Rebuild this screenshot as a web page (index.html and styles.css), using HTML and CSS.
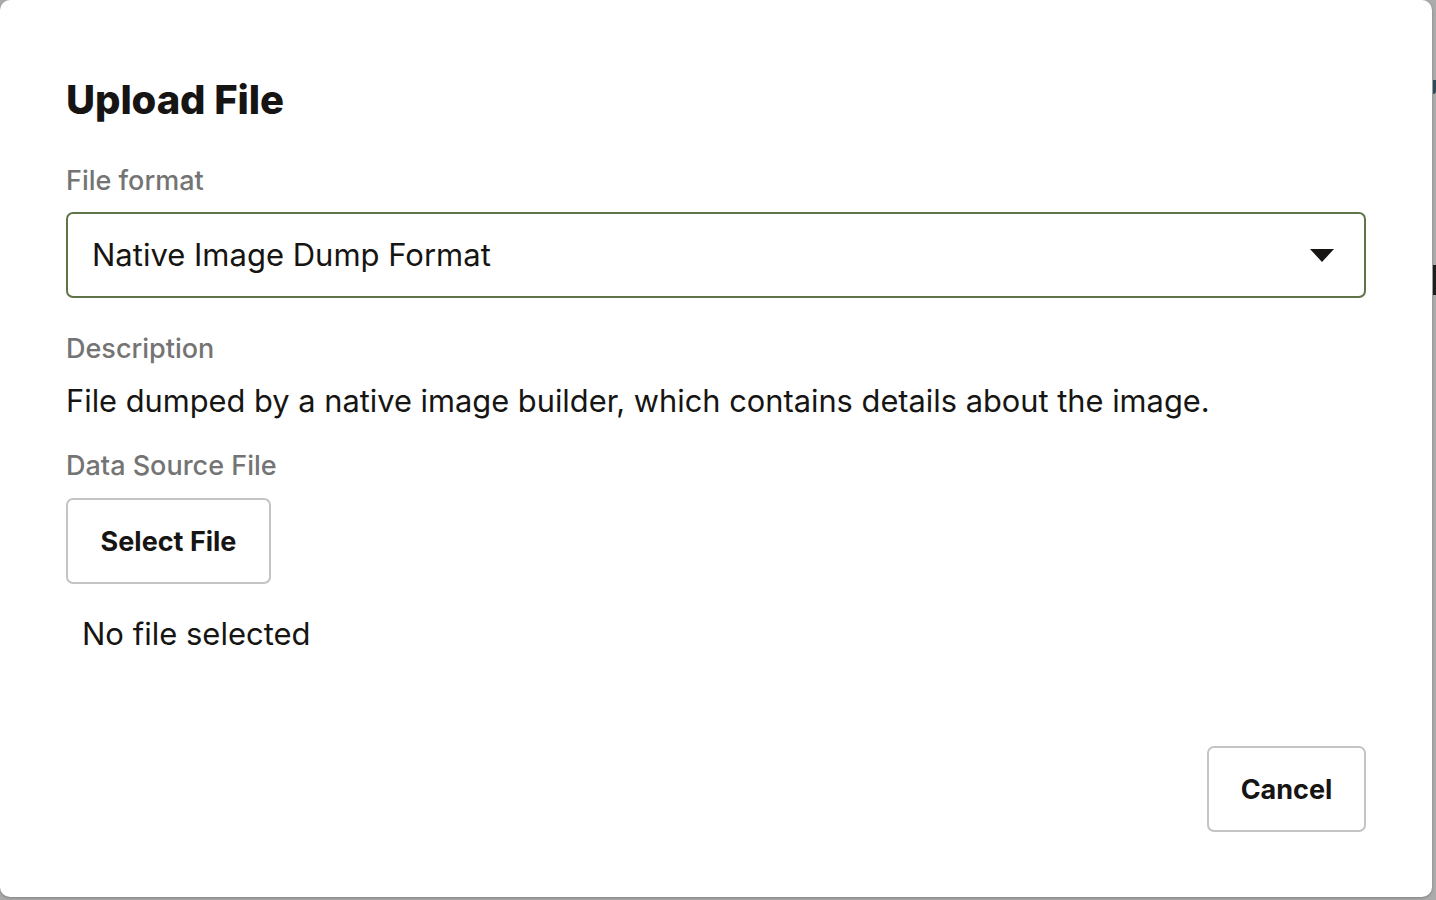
FILE: index.html
```html
<!DOCTYPE html>
<html>
<head>
<meta charset="utf-8">
<link rel="stylesheet" href="styles.css">
</head>
<body>
<div class="backdrop">
  <div class="dialog">
    <h1 class="title">Upload File</h1>
    <div class="field">
      <div class="label label-format">File format</div>
      <div class="select">
        <span class="select-text">Native Image Dump Format</span>
        <svg class="caret" width="24" height="13" viewBox="0 0 24 13"><path d="M0 0 H24 L12 13 Z" fill="#161513"/></svg>
      </div>
    </div>
    <div class="field">
      <div class="label label-desc">Description</div>
      <div class="desc">File dumped by a native image builder, which contains details about the image.</div>
    </div>
    <div class="field">
      <div class="label label-src">Data Source File</div>
      <button class="btn btn-select">Select File</button>
      <div class="nofile">No file selected</div>
    </div>
    <div class="footer">
      <button class="btn btn-cancel">Cancel</button>
    </div>
  </div>
  <div class="side">
    <div class="side-mark side-mark-a"></div>
    <div class="side-mark side-mark-b"></div>
  </div>
</div>
</body>
</html>
```
FILE: styles.css
```css
html, body {
  margin: 0;
  padding: 0;
  height: 100%;
}
body {
  background: #ababab;
  font-family: Inter, "Noto Sans", sans-serif;
  color: #161513;
  overflow: hidden;
}
.backdrop {
  display: flex;
  height: 900px;
}
.dialog {
  width: 1432px;
  height: 897px;
  flex: none;
  background: #ffffff;
  border-radius: 10px;
  box-shadow: 0 1px 3px rgba(0,0,0,0.25);
  box-sizing: border-box;
  padding: 76px 66px 0 66px;
  display: flex;
  flex-direction: column;
}
.title {
  margin: 0;
  font-size: 40px;
  font-weight: 800;
  line-height: 48px;
  letter-spacing: -0.1px;
}
.label {
  font-size: 27px;
  font-weight: 500;
  color: #747474;
  line-height: 32px;
}
.label-format {
  margin-top: 41px;
}
.select {
  margin-top: 15px;
  height: 86px;
  box-sizing: border-box;
  border: 2px solid #5f7449;
  border-radius: 7px;
  display: flex;
  align-items: center;
  padding: 0 30px 0 24px;
}
.select-text {
  flex: 1;
  font-size: 31px;
  line-height: 38px;
}
.caret {
  display: block;
}
.label-desc {
  margin-top: 35px;
}
.desc {
  margin-top: 17px;
  font-size: 30.8px;
  line-height: 38px;
}
.label-src {
  margin-top: 30px;
}
.btn {
  font-family: inherit;
  background: #ffffff;
  border: 2px solid #c4c4c4;
  border-radius: 7px;
  font-size: 27px;
  font-weight: 700;
  color: #161513;
  height: 86px;
  box-sizing: border-box;
  padding: 0;
  cursor: pointer;
}
.btn-select {
  margin-top: 16px;
  width: 205px;
}
.nofile {
  margin-top: 31px;
  padding-left: 16px;
  font-size: 31px;
  line-height: 38px;
}
.footer {
  margin-top: auto;
  margin-bottom: 65px;
  display: flex;
  justify-content: flex-end;
}
.btn-cancel {
  width: 159px;
}
.side {
  flex: 1;
  display: flex;
  flex-direction: column;
}
.side-mark {
  width: 3px;
  margin-left: 1px;
}
.side-mark-a {
  margin-top: 80px;
  height: 14px;
  background: #2f4b59;
  border-radius: 0 0 3px 0;
}
.side-mark-b {
  margin-top: 171px;
  height: 30px;
  background: #1e1e1e;
}
```
